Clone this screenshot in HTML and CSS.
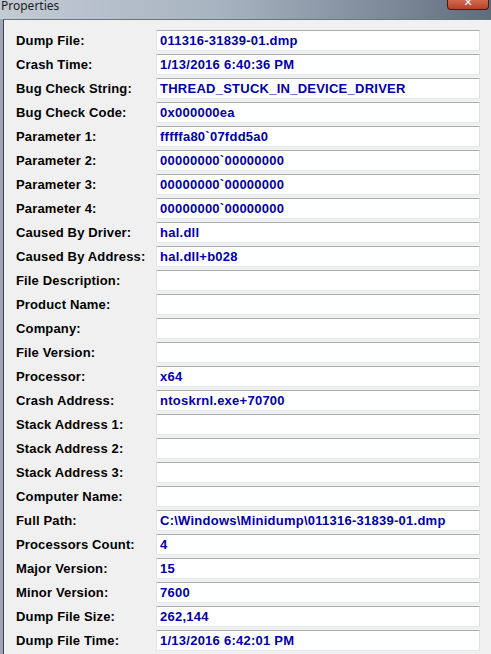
FILE: index.html
```html
<!DOCTYPE html>
<html>
  <head>
    <meta charset="utf-8" />
    <link rel="stylesheet" href="styles.css">
    <title>Properties</title>
  </head>
  <body>
    <div class="window">
      <div class="titlebar">
        <span class="title">Properties</span>
        <span class="close">&#x2715;</span>
      </div>
      <div class="frame">
        <div class="panel">
          <div class="row"><span class="lbl">Dump File:</span><span class="box">011316-31839-01.dmp</span></div>
          <div class="row"><span class="lbl">Crash Time:</span><span class="box">1/13/2016 6:40:36 PM</span></div>
          <div class="row"><span class="lbl">Bug Check String:</span><span class="box">THREAD_STUCK_IN_DEVICE_DRIVER</span></div>
          <div class="row"><span class="lbl">Bug Check Code:</span><span class="box">0x000000ea</span></div>
          <div class="row"><span class="lbl">Parameter 1:</span><span class="box">fffffa80`07fdd5a0</span></div>
          <div class="row"><span class="lbl">Parameter 2:</span><span class="box">00000000`00000000</span></div>
          <div class="row"><span class="lbl">Parameter 3:</span><span class="box">00000000`00000000</span></div>
          <div class="row"><span class="lbl">Parameter 4:</span><span class="box">00000000`00000000</span></div>
          <div class="row"><span class="lbl">Caused By Driver:</span><span class="box">hal.dll</span></div>
          <div class="row"><span class="lbl">Caused By Address:</span><span class="box">hal.dll+b028</span></div>
          <div class="row"><span class="lbl">File Description:</span><span class="box"></span></div>
          <div class="row"><span class="lbl">Product Name:</span><span class="box"></span></div>
          <div class="row"><span class="lbl">Company:</span><span class="box"></span></div>
          <div class="row"><span class="lbl">File Version:</span><span class="box"></span></div>
          <div class="row"><span class="lbl">Processor:</span><span class="box">x64</span></div>
          <div class="row"><span class="lbl">Crash Address:</span><span class="box">ntoskrnl.exe+70700</span></div>
          <div class="row"><span class="lbl">Stack Address 1:</span><span class="box"></span></div>
          <div class="row"><span class="lbl">Stack Address 2:</span><span class="box"></span></div>
          <div class="row"><span class="lbl">Stack Address 3:</span><span class="box"></span></div>
          <div class="row"><span class="lbl">Computer Name:</span><span class="box"></span></div>
          <div class="row"><span class="lbl">Full Path:</span><span class="box">C:\Windows\Minidump\011316-31839-01.dmp</span></div>
          <div class="row"><span class="lbl">Processors Count:</span><span class="box">4</span></div>
          <div class="row"><span class="lbl">Major Version:</span><span class="box">15</span></div>
          <div class="row"><span class="lbl">Minor Version:</span><span class="box">7600</span></div>
          <div class="row"><span class="lbl">Dump File Size:</span><span class="box">262,144</span></div>
          <div class="row"><span class="lbl">Dump File Time:</span><span class="box">1/13/2016 6:42:01 PM</span></div>
        </div>
      </div>
    </div>
  </body>
</html>
```

FILE: styles.css
```css
html, body {
  margin: 0;
  padding: 0;
  background: #f0f0f0;
}
.window {
  width: 491px;
  height: 654px;
  overflow: hidden;
  display: flex;
  flex-direction: column;
  background: #9ba7b4;
}
.titlebar {
  height: 19px;
  flex: none;
  display: flex;
  align-items: flex-start;
  background: linear-gradient(to right, #c3cbd4, #a7b3c0 45%, #7a8898 80%, #5e6c7c);
}
.title {
  font-family: "Noto Sans", "DejaVu Sans", sans-serif;
  font-size: 12px;
  line-height: 13px;
  margin-top: -1px;
  margin-left: 1px;
  color: #1a1f26;
}
.close {
  margin-left: auto;
  margin-right: 2px;
  width: 42px;
  height: 10px;
  box-sizing: border-box;
  border: 1px solid #4a1a12;
  border-top: 0;
  border-radius: 0 0 4px 4px;
  background: linear-gradient(#d06a50, #b8402a);
  color: #fff;
  font-family: "DejaVu Sans", sans-serif;
  font-size: 11px;
  font-weight: bold;
  line-height: 6px;
  text-align: center;
  overflow: hidden;
}
.frame {
  flex: 1;
  padding-left: 3px;
  background: #9ba7b4;
  display: flex;
}
.panel {
  flex: 1;
  background: #f0f0f0;
  border-left: 1px solid #3d4650;
  border-top: 1px solid #6b7580;
  padding: 10px 11px 0 11px;
  display: flex;
  flex-direction: column;
  gap: 3px;
}
.row {
  display: flex;
  align-items: center;
  height: 21px;
}
.lbl {
  width: 140px;
  flex: none;
  padding-left: 1px;
  font-family: "Liberation Sans", Arial, sans-serif;
  font-weight: bold;
  font-size: 13px;
  letter-spacing: 0.15px;
  color: #000;
}
.box {
  flex: 1;
  height: 21px;
  box-sizing: border-box;
  background: #fff;
  border-top: 1px solid #abadb3;
  border-left: 1px solid #e2e3ea;
  border-right: 1px solid #dbdfe6;
  border-bottom: 1px solid #e3e9ef;
  padding: 0 3px;
  font-family: "Liberation Sans", Arial, sans-serif;
  font-weight: bold;
  font-size: 13px;
  letter-spacing: 0.25px;
  line-height: 19px;
  color: #0000aa;
  white-space: nowrap;
  overflow: hidden;
}
```
